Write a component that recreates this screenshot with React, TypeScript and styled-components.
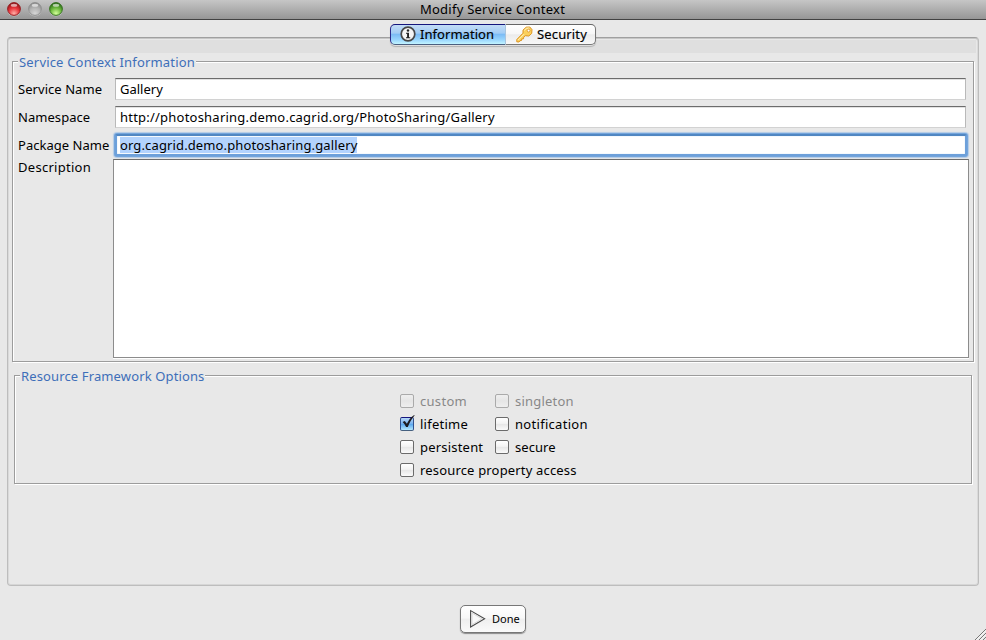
import React from "react";
import styled, { createGlobalStyle, css } from "styled-components";

const GlobalStyle = createGlobalStyle`
  * { box-sizing: border-box; }
  body { margin: 0; overflow: hidden; }
`;

const Window = styled.main`
  display: flex;
  flex-direction: column;
  width: 986px;
  height: 640px;
  background: #e8e8e8;
  color: #000;
  font: 13px/18px "Noto Sans", "Open Sans", sans-serif;
  overflow: hidden;
`;

const Text = styled.span<{ $track?: number }>`
  white-space: nowrap;
  letter-spacing: ${(p) => p.$track ?? 0}px;
`;

const TitleBar = styled.header`
  display: grid;
  grid-template-columns: 1fr auto 1fr;
  flex: none;
  height: 20px;
  padding: 0 0 0 7px;
  border-bottom: 1px solid #424242;
  background: linear-gradient(#c6c6c6, #969696);
`;

const Title = styled.h1`
  margin: 0;
  padding-right: 8px;
  font: inherit;
`;

const Lights = styled.div`
  display: flex;
  gap: 7px;
  padding-top: 2px;
`;

const TabBar = styled.nav`
  display: flex;
  flex: none;
  z-index: 1;
  width: 206px;
  height: 22px;
  margin: 4px 0 0 390px;
  border-radius: 5px;
  box-shadow: 0 1px 1px #0003;
`;

const Tab = styled.button<{ $active?: boolean }>`
  display: flex;
  align-items: flex-start;
  height: 21px;
  border: 1px solid #777;
  color: #000;
  font: inherit;
  -webkit-text-stroke: 0.15px currentColor;
  ${(p) =>
    p.$active
      ? css`
          width: 115px;
          padding: 0 0 0 9px;
          gap: 4px;
          border-color: #15157c #6f9fd0 #4a5f80 #2b2b8c;
          border-right: 0;
          border-radius: 5px 0 0 5px;
          background: linear-gradient(#c3dcf6 0%, #a3cdf5 42%, #7cbcf5 50%, #9ad6fd 78%, #c2f4ff 100%);
        `
      : css`
          width: 91px;
          padding: 0 0 0 10px;
          gap: 4px;
          border-left: 1px solid #8fa6bd;
          border-color: #666 #777 #777 #a8c4de;
          border-radius: 0 5px 5px 0;
          background: linear-gradient(#fff 0%, #f7f7f7 45%, #ebebeb 52%, #f8f8f8 100%);
        `}
  svg { flex: none; margin-top: 1px; }
`;

const Panel = styled.section`
  flex: none;
  width: 972px;
  height: 549px;
  margin: -9px 0 0 7px;
  border: 1px solid #bdbdbd;
  border-top-color: #a0a0a0;
  border-radius: 4px;
  box-shadow: inset 0 1px 0 #c6c6c6, inset 1px 0 0 #dadada, inset -1px 0 0 #dadada, inset 0 -1px 0 #d6d6d6;
`;

const PanelStrip = styled.div`
  height: 13px;
  margin: 2px 2px 0;
  background: #dfdfdf;
`;

const Group = styled.section<{ $inset: number; $height: number; $top: number }>`
  height: ${(p) => p.$height}px;
  margin: ${(p) => p.$top}px ${(p) => p.$inset}px 0;
  border: 1px solid #9c9c9c;
  box-shadow: 1px 1px 0 #fff, inset 1px 1px 0 #fff;
`;

const Legend = styled.h2`
  width: fit-content;
  height: 18px;
  margin: -9px 0 0 5px;
  padding: 0 1px;
  background: #e8e8e8;
  color: #3e6fb9;
  font: inherit;
`;

const Form = styled.div`
  padding: 7px 4px 0 5px;
`;

const FormRow = styled.label<{ $last?: boolean }>`
  display: grid;
  grid-template-columns: 95px 1fr;
  height: ${(p) => (p.$last ? 199 : 22)}px;
  margin-bottom: 6px;
  ${Text} { padding-top: 2px; }
  &:nth-child(3) { margin-bottom: 3px; }
  ${(p) => p.$last && css`${Text} { margin-top: -3px; }`}
`;

const Field = styled.div<{ $focus?: boolean }>`
  display: flex;
  align-items: flex-start;
  height: 22px;
  margin: 0 3px 0 2px;
  padding: 1px 0 0 4px;
  border: 1px solid #b9b9b9;
  border-top-color: #6c6c6c;
  border-bottom-color: #d2d2d2;
  box-shadow: inset 0 1px 0 #e2e2e2;
  background: #fff;
  ${Text} { padding-top: 0; }
  ${(p) =>
    p.$focus &&
    css`
      height: 22px;
      margin: 0 2px 0 2px;
      padding: 0 0 0 3px;
      border: 2px solid #6da0da;
      border-top-color: #5187c2;
      border-radius: 2px;
      box-shadow: 0 0 0 1px #74a5dc, 0 0 1px 2px #b3cbe6, inset 0 0 1px 0 #9bbfe8;
    `}
`;

const Selection = styled.span`
  display: flex;
  align-items: center;
  height: 16px;
  margin-top: 1px;
  background: #b3d3fd;
`;

const Area = styled.div`
  border: 1px solid #8c8c8c;
  border-top-color: #6d6d6d;
  box-shadow: 0 1px 0 #fff;
  background: #fff;
`;

const Options = styled.div`
  display: grid;
  grid-template-columns: 95px 120px;
  grid-auto-rows: 23px;
  padding: 5px 0 0 385px;
`;

const Option = styled.label<{ $disabled?: boolean; $wide?: boolean }>`
  display: flex;
  align-items: flex-start;
  gap: 6px;
  padding-top: 2px;
  color: ${(p) => (p.$disabled ? "#888" : "#000")};
  ${(p) => p.$wide && "grid-column: 1 / 3;"}
`;

const Box = styled.span<{ $checked?: boolean; $disabled?: boolean }>`
  flex: none;
  width: 14px;
  height: 14px;
  margin-top: 2px;
  border: 1px solid ${(p) => (p.$disabled ? "#aaa" : "#6b6b6b")};
  border-radius: 2px;
  background: linear-gradient(#fff 0%, #f3f3f3 45%, #e7e7e7 52%, #fafafa 100%);
  ${(p) => p.$disabled && "background: linear-gradient(#efefef, #e5e5e5 50%, #eee);"}
  ${(p) =>
    p.$checked &&
    css`
      border-color: #16167e #31518d #45607f;
      background: linear-gradient(#b5d6f7 0%, #7db6f1 45%, #5ba7ee 52%, #b5e9ff 100%);
    `}
  svg { display: block; margin: -3px 0 0 -1px; overflow: visible; }
`;

const Footer = styled.footer`
  display: flex;
  flex: 1;
  align-items: flex-start;
  justify-content: space-between;
  padding: 19px 0 0 460px;
`;

const Done = styled.button`
  display: flex;
  align-items: center;
  gap: 6px;
  width: 66px;
  height: 28px;
  padding: 0 0 0 8px;
  border: 1px solid #777;
  border-radius: 5px;
  background: linear-gradient(#fff 0%, #f8f8f8 45%, #efefef 52%, #fafafa 100%);
  box-shadow: 0 1px 1px #0006;
  color: #000;
  font: 11px/18px "Noto Sans", sans-serif;
`;

const Grip = styled.svg`
  align-self: flex-end;
`;

function Light({ id, dark, mid, glow }: { id: string; dark: string; mid: string; glow: string }) {
  return (
    <svg width="14" height="15" viewBox="0 0 14 15">
      <defs>
        <radialGradient id={id} cx=".5" cy=".85" r=".8">
          <stop offset="0" stopColor={glow} />
          <stop offset=".55" stopColor={mid} />
          <stop offset="1" stopColor={dark} />
        </radialGradient>
      </defs>
      <circle cx="7" cy="7.7" r="6.7" fill="#fff" opacity=".35" />
      <circle cx="7" cy="7" r="6.4" fill={`url(#${id})`} stroke={dark} strokeWidth=".9" />
      <ellipse cx="7" cy="3.3" rx="3.2" ry="1.5" fill="#fff" opacity=".6" />
    </svg>
  );
}

const InfoIcon = () => (
  <svg width="16" height="16" viewBox="0 0 16 16">
    <circle cx="8" cy="8" r="6.8" fill="#f4f4f4" stroke="#484848" strokeWidth="1.7" />
    <circle cx="8" cy="4.5" r="1.2" fill="#222" />
    <path d="M6 6.7h3v4.6h1.2v1H6v-1h1.1V7.7H6z" fill="#222" />
  </svg>
);

const KeyIcon = () => (
  <svg width="17" height="17" viewBox="0 0 17 17">
    <path
      d="M10.2 1.2 13.8 1 16 3.6 15.7 7.4 12.8 10 9.3 9.7 7.7 11.2 7.5 12.8 5.8 12.9 5.5 14.5 4 14.7 3 16 .8 15.8.8 13.5 7 7.2 7 4.1Z"
      fill="#fbd05c"
      stroke="#dd9420"
      strokeWidth="1"
      strokeLinejoin="round"
    />
    <path d="M8.2 4.4 10.7 2.2 13.3 2M2 14.2 8 8.2" fill="none" stroke="#fff3c4" strokeWidth="1" />
    <circle cx="12.6" cy="4.6" r="1.4" fill="#fff" stroke="#d99127" strokeWidth=".8" />
  </svg>
);

const Check = () => (
  <svg width="16" height="14" viewBox="0 0 16 14">
    <path d="M2.6 7 4.8 5.9 6.9 8.7C8.6 5.2 10.8 2.2 14.2 0L14.6.5C11.8 3.8 9.6 7.6 7.8 12H6.1C5.2 10.1 4 8.4 2.6 7Z" fill="#1c1c22" />
  </svg>
);

const PlayIcon = () => (
  <svg width="17" height="20" viewBox="0 0 17 20">
    <path d="M1.6 1.6V18L15.6 9.8Z" fill="#fafafa" stroke="#4a4a4a" strokeWidth="1.1" />
    <path d="M3 4V15.6L12.8 9.8Z" fill="none" stroke="#ccc" strokeWidth=".7" />
  </svg>
);

const options = [
  { label: "custom", track: 0.3, disabled: true },
  { label: "singleton", track: 0.2, disabled: true },
  { label: "lifetime", track: 0.26, checked: true },
  { label: "notification", track: 0.3 },
  { label: "persistent", track: 0.2 },
  { label: "secure", track: 0.05 },
  { label: "resource property access", track: 0.17, wide: true },
];

export default function App() {
  return (
    <Window>
      <GlobalStyle />
      <TitleBar>
        <Lights>
          <Light id="close" dark="#8f1519" mid="#e8333a" glow="#ffb0a8" />
          <Light id="minimise" dark="#8b8b8b" mid="#b4b4b4" glow="#d6d6d6" />
          <Light id="zoom" dark="#2c6a18" mid="#6cb83d" glow="#d4ff9a" />
        </Lights>
        <Title><Text $track={0.25}>Modify Service Context</Text></Title>
      </TitleBar>
      <TabBar>
        <Tab $active><InfoIcon /><Text $track={0.05}>Information</Text></Tab>
        <Tab><KeyIcon /><Text $track={0.15}>Security</Text></Tab>
      </TabBar>
      <Panel>
        <PanelStrip />
        <Group $inset={4} $height={301} $top={8}>
          <Legend><Text $track={0.18}>Service Context Information</Text></Legend>
          <Form>
            <FormRow>
              <Text $track={0.05}>Service Name</Text>
              <Field><Text $track={0}>Gallery</Text></Field>
            </FormRow>
            <FormRow>
              <Text $track={0.05}>Namespace</Text>
              <Field><Text $track={0.22}>http://photosharing.demo.cagrid.org/PhotoSharing/Gallery</Text></Field>
            </FormRow>
            <FormRow>
              <Text $track={0.02}>Package Name</Text>
              <Field $focus>
                <Selection><Text $track={0.13}>org.cagrid.demo.photosharing.gallery</Text></Selection>
              </Field>
            </FormRow>
            <FormRow $last>
              <Text $track={0.28}>Description</Text>
              <Area />
            </FormRow>
          </Form>
        </Group>
        <Group $inset={6} $height={109} $top={13}>
          <Legend><Text $track={0.13}>Resource Framework Options</Text></Legend>
          <Options>
            {options.map((o) => (
              <Option key={o.label} $disabled={o.disabled} $wide={o.wide}>
                <Box $checked={o.checked} $disabled={o.disabled}>{o.checked && <Check />}</Box>
                <Text $track={o.track}>{o.label}</Text>
              </Option>
            ))}
          </Options>
        </Group>
      </Panel>
      <Footer>
        <Done><PlayIcon /><Text>Done</Text></Done>
        <Grip width="12" height="12" viewBox="0 0 12 12">
          <path d="M1 12 12 1M5 12 12 5M9 12 12 9" stroke="#777" strokeWidth="1" />
          <path d="M2.4 12 12 2.4M6.4 12 12 6.4" stroke="#fff" strokeWidth=".8" />
        </Grip>
      </Footer>
    </Window>
  );
}
